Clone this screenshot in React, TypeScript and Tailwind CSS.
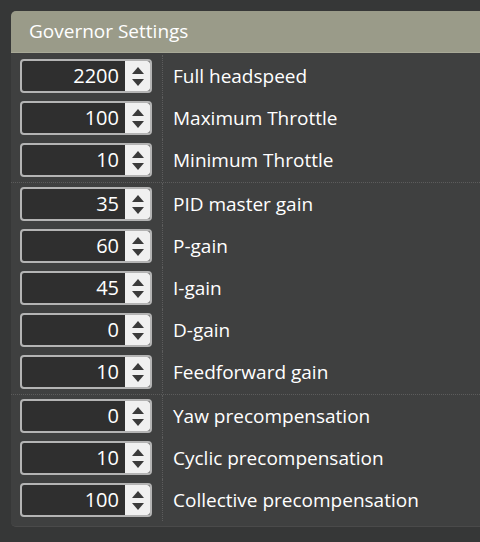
const groups = [
  [
    { value: 2200, label: "Full headspeed" },
    { value: 100, label: "Maximum Throttle" },
    { value: 10, label: "Minimum Throttle" },
  ],
  [
    { value: 35, label: "PID master gain" },
    { value: 60, label: "P-gain" },
    { value: 45, label: "I-gain" },
    { value: 0, label: "D-gain" },
    { value: 10, label: "Feedforward gain" },
  ],
  [
    { value: 0, label: "Yaw precompensation" },
    { value: 10, label: "Cyclic precompensation" },
    { value: 100, label: "Collective precompensation" },
  ],
];

function Spinner() {
  return (
    <div className="w-[25px] h-full bg-[#f0f0f0] flex flex-col items-center justify-center gap-[5px] rounded-r-[3px]">
      <svg width="12" height="7" viewBox="0 0 12 7">
        <path d="M6 0 L12 7 L0 7 Z" fill="#3a3a3a" />
      </svg>
      <svg width="12" height="7" viewBox="0 0 12 7">
        <path d="M0 0 L12 0 L6 7 Z" fill="#3a3a3a" />
      </svg>
    </div>
  );
}

function Row({ value, label }: { value: number; label: string }) {
  return (
    <div className="flex h-[42px]">
      <div className="w-[152px] shrink-0 pl-[9px] flex items-center border-r border-dotted border-[#5c5c5c]">
        <div className="w-[132px] h-[34px] flex border-2 border-[#b4b4b4] rounded-[4px] overflow-hidden bg-[#2f2f2f]">
          <div className="flex-1 flex items-center justify-end pr-[6px] text-[20px] font-medium text-white">{value}</div>
          <Spinner />
        </div>
      </div>
      <div className="flex items-center pl-[10px] text-[19px] font-medium text-white">{label}</div>
    </div>
  );
}

export default function App() {
  return (
    <div className="w-[480px] h-[542px] bg-[#363737] pt-[11px] pl-[11px] overflow-hidden font-['Open_Sans',sans-serif]">
      <div className="bg-[#3f4040] rounded-l-[5px] border-b border-[#4a4a4a] overflow-hidden">
        <div className="h-[42px] bg-[#9a9b89] flex items-center pl-[18px] text-[19px] text-white border-b border-[#a8a997]">
          Governor Settings
        </div>
        <div className="pt-[2px] pb-[5px]">
          {groups.map((g, gi) => (
            <div
              key={gi}
              className={
                (gi > 0 ? "border-t border-dotted border-[#5c5c5c] " : "") + (gi < groups.length - 1 ? "pb-[1px]" : "")
              }
            >
              {g.map((r) => (
                <Row key={r.label} value={r.value} label={r.label} />
              ))}
            </div>
          ))}
        </div>
      </div>
    </div>
  );
}
